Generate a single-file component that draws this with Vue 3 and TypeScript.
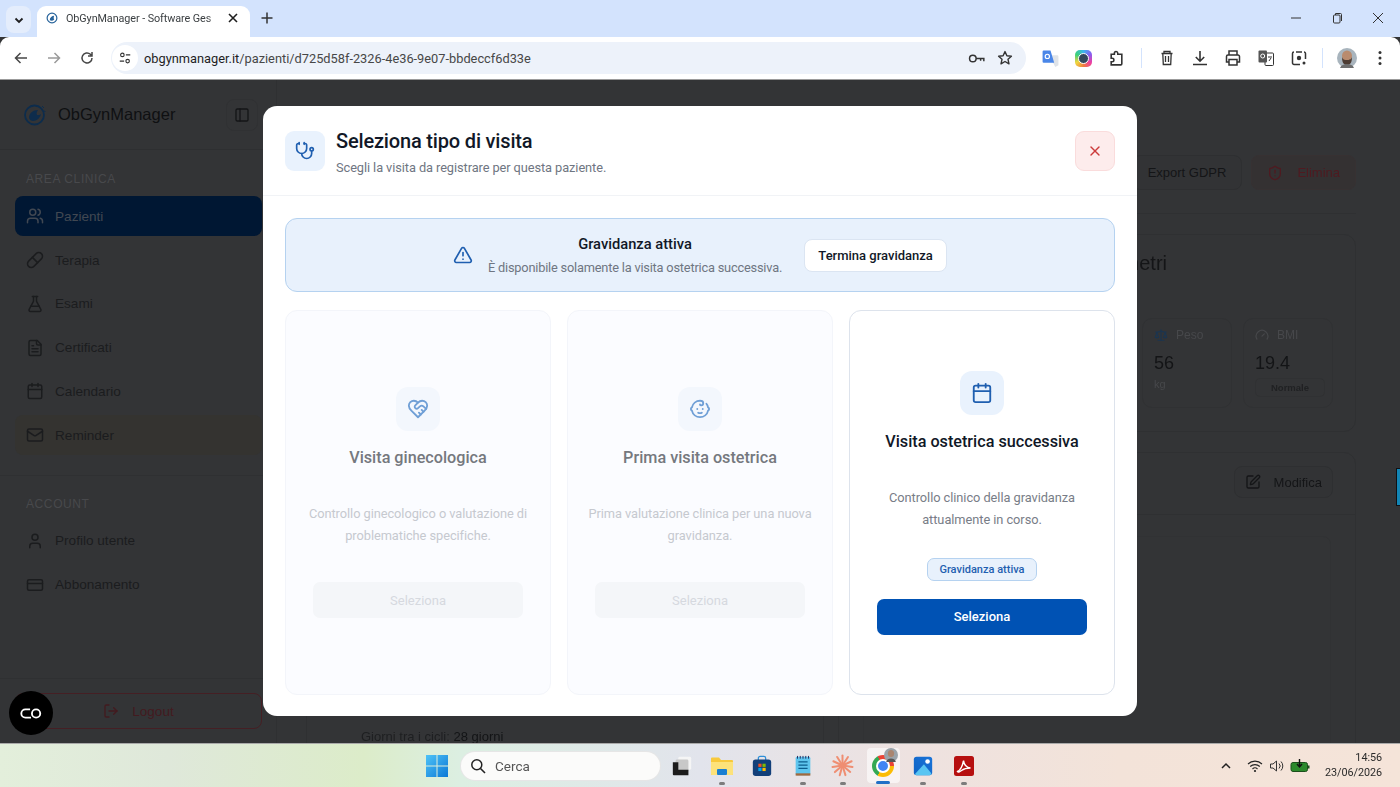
<template>
  <div class="screen">
    <!-- browser chrome -->
    <div class="tabstrip">
      <button class="tab-list">
        <svg viewBox="0 0 12 12" width="12" height="12"><path d="M2.5 4.5 6 8l3.5-3.5" fill="none" stroke="#1f1f1f" stroke-width="1.8" /></svg>
      </button>
      <div class="tab">
        <svg class="favicon" viewBox="0 0 16 16" width="12" height="12">
          <circle cx="8" cy="8" r="6.5" fill="none" stroke="#27639b" stroke-width="1.6" />
          <path d="M5 11c0-4 3-6 6-6-1 2-1 4 0 5-2 2-4 2-6 1Z" fill="#27639b" />
        </svg>
        <span class="tab-title">ObGynManager - Software Ges</span>
        <svg class="tab-close" viewBox="0 0 12 12" width="12" height="12"><path d="m2 2 8 8M10 2l-8 8" stroke="#1f1f1f" stroke-width="1.6" /></svg>
      </div>
      <svg class="tab-new" viewBox="0 0 14 14" width="14" height="14"><path d="M7 1.5v11M1.5 7h11" stroke="#333" stroke-width="1.5" /></svg>
      <div class="win-controls">
        <span class="win-btn"><svg viewBox="0 0 12 12" width="12" height="12"><path d="M1 6h10" stroke="#333" /></svg></span>
        <span class="win-btn"><svg viewBox="0 0 12 12" width="12" height="12"><rect x="2.5" y="3" width="6.5" height="8" rx="1" fill="none" stroke="#333" /><path d="M4.5 3V1.5h5a1 1 0 0 1 1 1V9" fill="none" stroke="#333" /></svg></span>
        <span class="win-btn"><svg viewBox="0 0 12 12" width="12" height="12"><path d="m1 1 10 10M11 1 1 11" stroke="#333" /></svg></span>
      </div>
    </div>

    <div class="toolbar">
      <span class="slot"><svg viewBox="0 0 16 16" width="16" height="16"><path d="M14 8H2.8M7.5 3 2.5 8l5 5" fill="none" stroke="#474747" stroke-width="1.5" /></svg></span>
      <span class="slot"><svg viewBox="0 0 16 16" width="16" height="16"><path d="M2 8h11.2M8.5 3l5 5-5 5" fill="none" stroke="#9a9a9a" stroke-width="1.5" /></svg></span>
      <span class="slot"><svg viewBox="0 0 16 16" width="16" height="16"><path d="M13 8a5 5 0 1 1-1.6-3.7L13 6M13 2v4H9" fill="none" stroke="#474747" stroke-width="1.5" /></svg></span>
      <div class="omnibox">
        <span class="site-info">
          <svg viewBox="0 0 16 16" width="14" height="14"><circle cx="5" cy="4.5" r="2" fill="none" stroke="#333" stroke-width="1.3" /><path d="M9 4.5h5M2 11.5h5" stroke="#333" stroke-width="1.3" /><circle cx="11" cy="11.5" r="2" fill="none" stroke="#333" stroke-width="1.3" /></svg>
        </span>
        <span class="url">obgynmanager.it<span class="url-path">/pazienti/d725d58f-2326-4e36-9e07-bbdeccf6d33e</span></span>
        <svg class="omni-key" viewBox="0 0 18 12" width="17" height="11"><circle cx="5" cy="6" r="3.6" fill="none" stroke="#333" stroke-width="1.6" /><path d="M8.5 6H17v3M13.5 6v2.5" fill="none" stroke="#333" stroke-width="1.6" /></svg>
        <svg class="omni-star" viewBox="0 0 16 16" width="16" height="16"><path d="m8 1.6 1.9 4.2 4.5.5-3.4 3 1 4.5L8 11.5l-4 2.3 1-4.5-3.4-3 4.5-.5Z" fill="none" stroke="#333" stroke-width="1.4" stroke-linejoin="round" /></svg>
      </div>
      <span class="slot ext-first">
        <svg viewBox="0 0 18 18" width="19" height="19"><path d="M8 6h7.5a1 1 0 0 1 1 1v8.5l-3 1.5z" fill="#dfe3e8" /><path d="M2.5 1.5H9l3.5 11.5H2.5a1 1 0 0 1-1-1v-9.5a1 1 0 0 1 1-1Z" fill="#4a86e8" /><circle cx="6" cy="7" r="2" fill="none" stroke="#fff" stroke-width="1.1" /></svg>
      </span>
      <span class="slot"><span class="ring"><i></i></span></span>
      <span class="slot">
        <svg viewBox="0 0 16 16" width="17" height="17"><path d="M3 4h3V3a1.6 1.6 0 0 1 3.2 0v1H13v9a1 1 0 0 1-1 1H3v-3h1a1.6 1.6 0 0 0 0-3.2H3Z" fill="none" stroke="#333" stroke-width="1.5" /></svg>
      </span>
      <i class="sep"></i>
      <span class="slot">
        <svg viewBox="0 0 16 16" width="16" height="16"><path d="M2.5 3.5h11M5 3.5v-2h6v2M3.8 3.5 4.3 14.5h7.4l.5-11M6.5 6v6M9.5 6v6" fill="none" stroke="#333" stroke-width="1.3" /></svg>
      </span>
      <span class="slot">
        <svg viewBox="0 0 18 18" width="18" height="18"><path d="M9 2v10M4.8 8 9 12.2 13.2 8M2 15.5h14" fill="none" stroke="#333" stroke-width="1.6" /></svg>
      </span>
      <span class="slot">
        <svg viewBox="0 0 18 18" width="18" height="18"><path d="M5 6V2h8v4M5 13H2.5V7.5A1.5 1.5 0 0 1 4 6h10a1.5 1.5 0 0 1 1.5 1.5V13H13M5 10.5h8V16H5Z" fill="none" stroke="#333" stroke-width="1.5" /></svg>
      </span>
      <span class="slot">
        <svg viewBox="0 0 18 18" width="18" height="18"><rect x="8" y="4" width="8.5" height="12.5" rx="1" fill="#fff" stroke="#333" /><rect x="1.5" y="1.5" width="8.5" height="12" rx="1" fill="#555" /><circle cx="5.7" cy="7" r="2" fill="none" stroke="#fff" /><path d="M11 8h4M12 12l2-3" stroke="#333" /></svg>
      </span>
      <span class="slot">
        <svg viewBox="0 0 18 18" width="18" height="18"><path d="M6 3h6M6 15.5H4a1.5 1.5 0 0 1-1.5-1.5V4.5A1.5 1.5 0 0 1 4 3M14 3a1.5 1.5 0 0 1 1.5 1.5V10M10 15.5H6" fill="none" stroke="#333" stroke-width="1.5" /><circle cx="9" cy="9" r="2.2" fill="#333" /><circle cx="14" cy="14" r="1.5" fill="#333" /></svg>
      </span>
      <i class="sep sep-second"></i>
      <span class="slot ext-avatar">
        <svg viewBox="0 0 20 20" width="20" height="20">
          <circle cx="10" cy="10" r="10" fill="#a8b4bd" />
          <ellipse cx="10" cy="8" rx="5" ry="5.5" fill="#b98b6e" />
          <path d="M5 9c0 6 2 8 5 8s5-2 5-8c-1 3-3 3-5 3s-4 0-5-3Z" fill="#4d3c33" />
          <path d="M3 20c1-3 4-4 7-4s6 1 7 4Z" fill="#6e6e6e" />
        </svg>
      </span>
      <span class="slot">
        <svg viewBox="0 0 4 16" width="4" height="16"><circle cx="2" cy="2.5" r="1.5" fill="#333" /><circle cx="2" cy="8" r="1.5" fill="#333" /><circle cx="2" cy="13.5" r="1.5" fill="#333" /></svg>
      </span>
    </div>

    <!-- application page, dimmed behind the dialog -->
    <div class="page">
      <aside class="sidebar">
        <div class="brand">
          <svg class="brand-logo" viewBox="0 0 24 24" width="24" height="24">
            <circle cx="11.5" cy="12" r="9.5" fill="none" stroke="#0d2c4c" stroke-width="1.8" />
            <path d="M6 15c0-5 4-8 9-8-1 2-2 3-1 5 2 0 3 0 4-1-1 4-4 7-8 7-2 0-3-1-4-3Z" fill="#0d2c4c" />
            <path d="M19 3l2 2M21 8l1.5.5" stroke="#0d2c4c" />
          </svg>
          <span class="brand-name">ObGynManager</span>
          <button class="collapse">
            <svg class="ico" viewBox="0 0 24 24" width="16" height="16" v-html="icons.panel"></svg>
          </button>
        </div>

        <div class="nav-section">
          <p class="nav-label">AREA CLINICA</p>
          <a
            v-for="item in clinicalNav"
            :key="item.label"
            class="nav-item"
            :class="{ active: item.active, warm: item.warm }"
          >
            <svg class="ico" viewBox="0 0 24 24" width="18" height="18" v-html="icons[item.icon]"></svg>
            {{ item.label }}
          </a>
        </div>

        <div class="nav-section account">
          <p class="nav-label">ACCOUNT</p>
          <a v-for="item in accountNav" :key="item.label" class="nav-item">
            <svg class="ico" viewBox="0 0 24 24" width="18" height="18" v-html="icons[item.icon]"></svg>
            {{ item.label }}
          </a>
        </div>

        <div class="sidebar-foot">
          <button class="logout">
            <svg class="ico" viewBox="0 0 24 24" width="16" height="16" v-html="icons.logout"></svg>
            Logout
          </button>
        </div>
      </aside>

      <main class="main">
        <div class="main-head">
          <button class="ghost">Export GDPR</button>
          <button class="ghost danger">
            <svg class="ico" viewBox="0 0 24 24" width="16" height="16" v-html="icons.shield"></svg>
            Elimina
          </button>
        </div>
        <div class="columns">
          <section class="card left-card">
            <div class="spacer"></div>
            <p class="cycle"><span>Giorni tra i cicli:</span> 28 giorni</p>
          </section>
          <div class="right-col">
            <section class="card params">
              <h2 class="params-title">Parametri</h2>
              <div class="stats">
                <div class="stat">
                  <span class="stat-label"><svg class="ico scale" viewBox="0 0 24 24" width="14" height="14" v-html="icons.scale"></svg>Peso</span>
                  <strong>56</strong>
                  <small>kg</small>
                </div>
                <div class="stat">
                  <span class="stat-label"><svg class="ico" viewBox="0 0 24 24" width="14" height="14" v-html="icons.gauge"></svg>BMI</span>
                  <strong>19.4</strong>
                  <em>Normale</em>
                </div>
              </div>
            </section>
            <section class="card detail">
              <div class="detail-head">
                <button class="ghost">
                  <svg class="ico" viewBox="0 0 24 24" width="16" height="16" v-html="icons.pen"></svg>
                  Modifica
                </button>
              </div>
              <div class="detail-box"></div>
            </section>
          </div>
        </div>
      </main>

      <span class="edge-cursor"></span>

      <div class="overlay">
        <div class="modal">
          <header class="modal-head">
            <span class="tile head-tile">
              <svg class="ico" viewBox="0 0 24 24" width="20" height="20" v-html="icons.stethoscope"></svg>
            </span>
            <div class="head-text">
              <h1>Seleziona tipo di visita</h1>
              <p>Scegli la visita da registrare per questa paziente.</p>
            </div>
            <button class="close">
              <svg class="ico" viewBox="0 0 24 24" width="16" height="16" v-html="icons.x"></svg>
            </button>
          </header>

          <div class="modal-body">
            <div class="notice">
              <svg class="ico notice-icon" viewBox="0 0 24 24" width="20" height="20" v-html="icons.alert"></svg>
              <div class="notice-text">
                <strong>Gravidanza attiva</strong>
                <span>È disponibile solamente la visita ostetrica successiva.</span>
              </div>
              <button class="end-btn">Termina gravidanza</button>
            </div>

            <div class="visit-grid">
              <article
                v-for="visit in visits"
                :key="visit.title"
                class="visit"
                :class="{ disabled: !visit.enabled }"
              >
                <span class="tile visit-tile">
                  <svg class="ico" viewBox="0 0 24 24" width="22" height="22" v-html="icons[visit.icon]"></svg>
                </span>
                <h3>{{ visit.title }}</h3>
                <p>{{ visit.text }}</p>
                <span v-if="visit.enabled" class="chip">Gravidanza attiva</span>
                <button class="select">Seleziona</button>
              </article>
            </div>
          </div>
        </div>
      </div>

      <button class="assist">
        <svg viewBox="0 0 26 14" width="24" height="13"><path d="M12 2.5H7a4.5 4.5 0 0 0 0 9h6" fill="none" stroke="#fff" stroke-width="2" /><circle cx="18.5" cy="7" r="4.5" fill="none" stroke="#fff" stroke-width="2" /></svg>
      </button>
    </div>

    <!-- windows taskbar -->
    <footer class="taskbar">
      <div class="task-center">
        <svg class="task-start" viewBox="0 0 24 24" width="24" height="24">
          <defs>
            <linearGradient id="win" x1="0" y1="0" x2="1" y2="1"><stop offset="0" stop-color="#4fc3f7" /><stop offset="1" stop-color="#0b78d6" /></linearGradient>
          </defs>
          <path d="M1 1h10.5v10.5H1zM12.5 1H23v10.5H12.5zM1 12.5h10.5V23H1zM12.5 12.5H23V23H12.5z" fill="url(#win)" />
        </svg>
        <div class="search">
          <svg viewBox="0 0 16 16" width="16" height="16"><circle cx="6.8" cy="6.8" r="5" fill="none" stroke="#222" stroke-width="1.5" /><path d="m10.5 10.5 4.5 4.5" stroke="#222" stroke-width="1.6" /></svg>
          <span>Cerca</span>
        </div>
        <span class="task-app">
          <svg viewBox="0 0 24 24" width="22" height="22"><rect x="8" y="2" width="14" height="14" rx="1.5" fill="#f5f5f5" /><rect x="5" y="5" width="14" height="14" rx="1.5" fill="#c8c8c8" /><path d="M2 8h6v8h11v6H3a1 1 0 0 1-1-1Z" fill="#1c1c1c" /></svg>
        </span>
        <span class="task-app running">
          <svg viewBox="0 0 24 24" width="24" height="24"><path d="M1 4.5a1 1 0 0 1 1-1h7l2 2.5h11a1 1 0 0 1 1 1V20a1 1 0 0 1-1 1H2a1 1 0 0 1-1-1Z" fill="#f8c93c" /><path d="M1 8h22V20a1 1 0 0 1-1 1H2a1 1 0 0 1-1-1Z" fill="#fde27a" /><rect x="7" y="15" width="10" height="6" rx="1" fill="#1b7fd1" /></svg>
        </span>
        <span class="task-app">
          <svg viewBox="0 0 24 24" width="22" height="22"><path d="M8 6V3.5a2 2 0 0 1 2-2h4a2 2 0 0 1 2 2V6" fill="none" stroke="#2f8fd8" stroke-width="1.4" /><rect x="2" y="5" width="20" height="18" rx="3" fill="#123f79" /><rect x="8" y="9.5" width="3.5" height="3.5" fill="#f25022" /><rect x="12.5" y="9.5" width="3.5" height="3.5" fill="#7fba00" /><rect x="8" y="14" width="3.5" height="3.5" fill="#00a4ef" /><rect x="12.5" y="14" width="3.5" height="3.5" fill="#ffb900" /></svg>
        </span>
        <span class="task-app running">
          <svg viewBox="0 0 24 24" width="22" height="24"><rect x="4" y="2" width="16" height="20" rx="1.5" fill="#5ec5ee" /><path d="M7 7.5h10M7 11h10M7 14.5h10" stroke="#0b5e8e" stroke-width="1.3" /><rect x="4" y="20" width="16" height="2.5" fill="#a0693e" /><path d="M6 1v3M9 1v3M12 1v3M15 1v3M18 1v3" stroke="#225" stroke-width="1" /></svg>
        </span>
        <span class="task-app running">
          <svg viewBox="0 0 24 24" width="23" height="23"><path v-for="a in rayAngles" :key="a" d="M12 12V1.5" stroke="#ef8e72" stroke-width="2.1" stroke-linecap="round" :transform="`rotate(${a} 12 12)`" /></svg>
        </span>
        <span class="task-app current">
          <span class="chrome-mark"><i></i></span>
          <svg class="chrome-badge" viewBox="0 0 20 20" width="14" height="14"><circle cx="10" cy="10" r="10" fill="#9aa3aa" /><ellipse cx="10" cy="8" rx="4.5" ry="5" fill="#a98570" /><path d="M3 20c1-4 4-5 7-5s6 1 7 5Z" fill="#555" /></svg>
        </span>
        <span class="task-app running">
          <svg viewBox="0 0 24 24" width="22" height="22"><defs><linearGradient id="pho" x1="0" y1="1" x2="1" y2="0"><stop offset="0" stop-color="#0e63c4" /><stop offset="1" stop-color="#1a73d8" /></linearGradient></defs><rect x="2" y="2" width="20" height="20" rx="3" fill="url(#pho)" /><path d="M3 21 13 10l8 10a2 2 0 0 1-1.5 2H5Z" fill="#58c5f2" /><circle cx="17" cy="7" r="2.5" fill="#fff" /></svg>
        </span>
        <span class="task-app running">
          <svg viewBox="0 0 24 24" width="24" height="24"><rect x="2" y="2" width="20" height="20" rx="2.5" fill="#b60f0f" /><path d="M5.5 17.5c3-1.5 5-5 6-11 .5 4 3 7 7 7.5-3.5 0-7 1-9 2.5-2 1.5-3.5 2-4 1Z" fill="none" stroke="#fff" stroke-width="1.5" /></svg>
        </span>
      </div>

      <div class="tray">
        <svg viewBox="0 0 12 12" width="12" height="12"><path d="m2 8 4-4 4 4" fill="none" stroke="#222" stroke-width="1.5" /></svg>
        <svg class="tray-wifi" viewBox="0 0 16 14" width="16" height="14"><path d="M1 5a10 10 0 0 1 14 0M3.2 7.5a7 7 0 0 1 9.6 0M5.5 10a3.6 3.6 0 0 1 5 0" fill="none" stroke="#222" stroke-width="1.1" /><circle cx="8" cy="12" r="1.1" fill="#222" /></svg>
        <svg class="tray-sound" viewBox="0 0 16 14" width="16" height="14"><path d="M1.5 5v4h2.5l3.5 3V2L4 5Z" fill="none" stroke="#333" /><path d="M10 4.5a3.5 3.5 0 0 1 0 5M12 2.5a6.5 6.5 0 0 1 0 9" fill="none" stroke="#333" /></svg>
        <svg class="tray-battery" viewBox="0 0 20 14" width="20" height="14"><rect x="1" y="3.5" width="16.5" height="9" rx="2" fill="#2c8a2c" stroke="#1c4f1c" /><rect x="18" y="6.5" width="1.5" height="3" fill="#1c4f1c" /><path d="M9.5 0v7M7 5l2.5 3L12 5" fill="none" stroke="#111" stroke-width="1.4" /></svg>
        <div class="clock">
          <span>14:56</span>
          <span>23/06/2026</span>
        </div>
      </div>
    </footer>
  </div>
</template>

<script setup lang="ts">
interface NavItem {
  label: string;
  icon: string;
  active?: boolean;
  warm?: boolean;
}

const icons: Record<string, string> = {
  panel: '<rect width="18" height="18" x="3" y="3" rx="2"/><path d="M9 3v18"/>',
  users:
    '<path d="M16 21v-2a4 4 0 0 0-4-4H6a4 4 0 0 0-4 4v2"/><circle cx="9" cy="7" r="4"/><path d="M22 21v-2a4 4 0 0 0-3-3.87"/><path d="M16 3.13a4 4 0 0 1 0 7.75"/>',
  pill: '<path d="m10.5 20.5 10-10a4.95 4.95 0 1 0-7-7l-10 10a4.95 4.95 0 1 0 7 7Z"/><path d="m8.5 8.5 7 7"/>',
  flask:
    '<path d="M14 2v6a2 2 0 0 0 .245.96l5.51 10.08A2 2 0 0 1 18 22H6a2 2 0 0 1-1.755-2.96l5.51-10.08A2 2 0 0 0 10 8V2"/><path d="M6.453 15h11.094"/><path d="M8.5 2h7"/>',
  file: '<path d="M15 2H6a2 2 0 0 0-2 2v16a2 2 0 0 0 2 2h12a2 2 0 0 0 2-2V7Z"/><path d="M14 2v4a2 2 0 0 0 2 2h4"/><path d="M10 9H8"/><path d="M16 13H8"/><path d="M16 17H8"/>',
  calendar:
    '<path d="M8 2v4"/><path d="M16 2v4"/><rect width="18" height="18" x="3" y="4" rx="2"/><path d="M3 10h18"/>',
  mail: '<rect width="20" height="16" x="2" y="4" rx="2"/><path d="m22 7-8.97 5.7a1.94 1.94 0 0 1-2.06 0L2 7"/>',
  user: '<path d="M19 21v-2a4 4 0 0 0-4-4H9a4 4 0 0 0-4 4v2"/><circle cx="12" cy="7" r="4"/>',
  card: '<rect width="20" height="14" x="2" y="5" rx="2"/><path d="M2 10h20"/>',
  logout:
    '<path d="M9 21H5a2 2 0 0 1-2-2V5a2 2 0 0 1 2-2h4"/><path d="m16 17 5-5-5-5"/><path d="M21 12H9"/>',
  shield:
    '<path d="M20 13c0 5-3.5 7.5-7.66 8.95a1 1 0 0 1-.67-.01C7.5 20.5 4 18 4 13V6a1 1 0 0 1 1-1c2 0 4.5-1.2 6.24-2.72a1.17 1.17 0 0 1 1.52 0C14.51 3.81 17 5 19 5a1 1 0 0 1 1 1z"/><path d="M12 8v4"/><path d="M12 16h.01"/>',
  scale:
    '<path d="m16 16 3-8 3 8c-.87.65-1.92 1-3 1s-2.13-.35-3-1Z"/><path d="m2 16 3-8 3 8c-.87.65-1.92 1-3 1s-2.13-.35-3-1Z"/><path d="M7 21h10"/><path d="M12 3v18"/><path d="M3 7h2c2 0 5-1 7-2 2 1 5 2 7 2h2"/>',
  gauge: '<path d="m12 14 4-4"/><path d="M3.34 19a10 10 0 1 1 17.32 0"/>',
  pen: '<path d="M12 3H5a2 2 0 0 0-2 2v14a2 2 0 0 0 2 2h14a2 2 0 0 0 2-2v-7"/><path d="M18.375 2.625a1 1 0 0 1 3 3l-9.013 9.014a2 2 0 0 1-.853.505l-2.873.84a.5.5 0 0 1-.62-.62l.84-2.873a2 2 0 0 1 .506-.852z"/>',
  stethoscope:
    '<path d="M11 2v2"/><path d="M5 2v2"/><path d="M5 3H4a2 2 0 0 0-2 2v4a6 6 0 0 0 12 0V5a2 2 0 0 0-2-2h-1"/><path d="M8 15a6 6 0 0 0 12 0v-3"/><circle cx="20" cy="10" r="2"/>',
  x: '<path d="M18 6 6 18"/><path d="m6 6 12 12"/>',
  alert:
    '<path d="m21.73 18-8-14a2 2 0 0 0-3.48 0l-8 14A2 2 0 0 0 4 21h16a2 2 0 0 0 1.73-3"/><path d="M12 9v4"/><path d="M12 17h.01"/>',
  heart:
    '<path d="M19 14c1.49-1.46 3-3.21 3-5.5A5.5 5.5 0 0 0 16.5 3c-1.76 0-3 .5-4.5 2-1.5-1.5-2.74-2-4.5-2A5.5 5.5 0 0 0 2 8.5c0 2.3 1.5 4.05 3 5.5l7 7Z"/><path d="M12 5 9.04 7.96a2.17 2.17 0 0 0 0 3.08c.82.82 2.13.85 3 .07l2.07-1.9a2.82 2.82 0 0 1 3.79 0l2.96 2.66"/><path d="m18 15-2-2"/><path d="m15 18-2-2"/>',
  baby: '<path d="M9 12h.01"/><path d="M15 12h.01"/><path d="M10 16c.5.3 1.2.5 2 .5s1.5-.2 2-.5"/><path d="M19 6.3a9 9 0 0 1 1.8 3.9 2 2 0 0 1 0 3.6 9 9 0 0 1-17.6 0 2 2 0 0 1 0-3.6A9 9 0 0 1 12 3c2 0 3.5 1.1 3.5 2.5s-.9 2.5-2 2.5c-.8 0-1.5-.4-1.5-1"/>',
};

const clinicalNav: NavItem[] = [
  { label: "Pazienti", icon: "users", active: true },
  { label: "Terapia", icon: "pill" },
  { label: "Esami", icon: "flask" },
  { label: "Certificati", icon: "file" },
  { label: "Calendario", icon: "calendar" },
  { label: "Reminder", icon: "mail", warm: true },
];

const accountNav: NavItem[] = [
  { label: "Profilo utente", icon: "user" },
  { label: "Abbonamento", icon: "card" },
];

const visits = [
  {
    title: "Visita ginecologica",
    text: "Controllo ginecologico o valutazione di problematiche specifiche.",
    icon: "heart",
    enabled: false,
  },
  {
    title: "Prima visita ostetrica",
    text: "Prima valutazione clinica per una nuova gravidanza.",
    icon: "baby",
    enabled: false,
  },
  {
    title: "Visita ostetrica successiva",
    text: "Controllo clinico della gravidanza attualmente in corso.",
    icon: "calendar",
    enabled: true,
  },
];

const rayAngles = [0, 33, 65, 98, 130, 163, 196, 229, 262, 295, 328];
</script>

<style>
html,
body {
  margin: 0;
  background: #333436;
}
</style>

<style scoped>
.screen {
  display: flex;
  flex-direction: column;
  width: 1400px;
  height: 787px;
  overflow: hidden;
  font-family: "Liberation Sans", Arial, sans-serif;
}
button {
  font: inherit;
  cursor: pointer;
}
.ico {
  display: block;
  flex: none;
  fill: none;
  stroke: currentColor;
  stroke-width: 2;
  stroke-linecap: round;
  stroke-linejoin: round;
}

/* browser chrome */
.tabstrip {
  display: flex;
  align-items: flex-start;
  flex: none;
  height: 37px;
  padding-top: 6px;
  box-sizing: border-box;
  background: #d3e3fd;
}
.tab-list {
  display: flex;
  align-items: center;
  justify-content: center;
  width: 25px;
  height: 27px;
  margin-left: 6px;
  padding: 0;
  border: 0;
  border-radius: 8px;
  background: #e4edfc;
}
.tab {
  position: relative;
  display: flex;
  align-items: center;
  width: 213px;
  height: 31px;
  margin-left: 6px;
  padding: 0 11px 7px 9px;
  box-sizing: border-box;
  border-radius: 9px 9px 0 0;
  background: #fff;
}
.tab-title {
  flex: 1;
  margin-left: 8px;
  overflow: hidden;
  font-family: Roboto, sans-serif;
  font-size: 10.8px;
  letter-spacing: -0.08px;
  white-space: nowrap;
  color: #3c4043;
  -webkit-mask-image: linear-gradient(90deg, #000 92%, rgba(0, 0, 0, 0.25) 100%);
  mask-image: linear-gradient(90deg, #000 92%, rgba(0, 0, 0, 0.25) 100%);
}
.tab-close {
  flex: none;
  margin-left: 8px;
}
.tab-new {
  margin: 5px 0 0 10px;
}
.win-controls {
  display: flex;
  margin: 0 1.5px 0 auto;
}
.win-btn {
  display: flex;
  justify-content: center;
  width: 41px;
  padding-top: 6px;
}
.toolbar {
  display: flex;
  align-items: center;
  flex: none;
  height: 43px;
  padding: 0 0 0 4.5px;
  box-sizing: border-box;
  border-bottom: 1px solid #9b9b9b;
  border-radius: 9px 9px 0 0;
  background: #fff;
}
.slot {
  display: flex;
  align-items: center;
  justify-content: center;
  flex: none;
  width: 33px;
}
.omnibox {
  display: flex;
  align-items: center;
  width: 915px;
  height: 32px;
  margin-left: 7.5px;
  padding: 0 13px 0 1px;
  box-sizing: border-box;
  border-radius: 16px;
  background: #edf2fa;
}
.site-info {
  display: flex;
  align-items: center;
  justify-content: center;
  width: 26px;
  height: 26px;
  border-radius: 50%;
  background: #fff;
}
.url {
  margin-left: 6px;
  font-family: Roboto, sans-serif;
  font-size: 12.8px;
  white-space: nowrap;
  color: #1f1f1f;
}
.url-path {
  color: #474747;
}
.omni-key {
  margin-left: auto;
}
.omni-star {
  margin-left: 12px;
}
.ext-first {
  margin-left: 7.5px;
}
.ring {
  display: flex;
  align-items: center;
  justify-content: center;
  width: 17px;
  height: 17px;
  border-radius: 5px;
  background: conic-gradient(#3bb6f0, #8a5cf0, #ee3fa0, #f07b3f, #f0d63f, #3bd07a, #3bb6f0);
}
.ring i {
  width: 9px;
  height: 9px;
  border: 1px solid #fff;
  border-radius: 50%;
  background: #33475b;
}
.sep {
  flex: none;
  width: 1px;
  height: 20px;
  margin: 0 8px 0 8.5px;
  background: #d3e3fd;
}
.sep-second {
  margin: 0 7.5px 0 6.5px;
}

/* page behind the dialog */
.page {
  position: relative;
  display: flex;
  flex: 1;
  min-height: 0;
  overflow: hidden;
  background: #333436;
}
.sidebar {
  display: flex;
  flex-direction: column;
  flex: none;
  width: 277px;
  box-sizing: border-box;
  border-right: 1px solid #2f3032;
}
.brand {
  display: flex;
  align-items: center;
  flex: none;
  height: 69px;
  padding: 0 18px 0 23px;
  border-bottom: 1px solid #2e2f31;
}
.brand-name {
  margin-left: 11px;
  font-size: 16.5px;
  color: #0f1012;
}
.collapse {
  display: flex;
  align-items: center;
  justify-content: center;
  width: 32px;
  height: 32px;
  margin-left: auto;
  padding: 0;
  border: 1px solid #303133;
  border-radius: 8px;
  background: transparent;
  color: #141517;
}
.nav-section {
  display: flex;
  flex-direction: column;
  gap: 3.75px;
  padding: 21px 14px 0 15px;
}
.nav-label {
  margin: 0 0 5.5px 11px;
  font-size: 12px;
  letter-spacing: 0.6px;
  line-height: 16px;
  color: #48494c;
}
.nav-item {
  display: flex;
  align-items: center;
  gap: 11px;
  height: 40px;
  padding: 0 11px;
  border-radius: 8px;
  font-size: 13.6px;
  color: #1b1c1e;
}
.nav-item.active {
  background: #001733;
  color: #414852;
}
.nav-item.warm {
  background: #343330;
}
.account {
  margin-top: 19.5px;
  padding-top: 20px;
  border-top: 1px solid #2f3032;
}
.sidebar-foot {
  margin-top: auto;
  padding: 14px 14px 14px 15px;
  border-top: 1px solid #2f3032;
}
.logout {
  display: flex;
  align-items: center;
  justify-content: center;
  gap: 13px;
  width: 100%;
  height: 36px;
  padding: 0;
  border: 1px solid #451f24;
  border-radius: 8px;
  background: transparent;
  font-size: 13.5px;
  color: #431a1f;
}
.main {
  flex: 1;
  min-width: 0;
  padding: 75px 44px 0 29px;
  filter: blur(0.3px);
}
.main-head {
  display: flex;
  justify-content: flex-end;
  gap: 9px;
  height: 58px;
  border-bottom: 1px solid #2f3032;
}
.ghost {
  display: flex;
  align-items: center;
  justify-content: center;
  gap: 14px;
  height: 35px;
  padding: 0 15px;
  border: 1px solid #2e2f31;
  border-radius: 8px;
  background: #323335;
  font-size: 13px;
  color: #141517;
}
.ghost.danger {
  border-color: #373132;
  background: #343132;
  color: #4f1a20;
}
.columns {
  display: grid;
  grid-template-columns: 518px 518px;
  gap: 14px;
  margin-top: 20px;
}
.card {
  border: 1px solid #2f3032;
  border-radius: 12px;
}
.spacer {
  height: 496px;
}
.cycle {
  margin: 0 0 0 54px;
  font-size: 13px;
  line-height: 12px;
  color: #131416;
}
.cycle span {
  color: #1e1f21;
}
.right-col {
  display: flex;
  flex-direction: column;
  gap: 20px;
}
.params {
  position: relative;
  box-sizing: border-box;
  height: 198px;
}
.params-title {
  margin: 15px 0 0;
  padding-right: 188px;
  text-align: right;
  font-size: 20px;
  font-weight: 400;
  line-height: 26px;
  color: #141517;
}
.stats {
  display: flex;
  justify-content: flex-end;
  gap: 11px;
  margin-top: 42px;
  padding-right: 22px;
}
.stat {
  display: flex;
  flex-direction: column;
  width: 90px;
  height: 90px;
  padding: 9px 0 0 11px;
  box-sizing: border-box;
  border: 1px solid #303133;
  border-radius: 10px;
  font-size: 12px;
  color: #47484b;
}
.stat-label {
  display: flex;
  align-items: center;
  gap: 8px;
}
.stat-label .scale {
  color: #1b3550;
}
.stat strong {
  margin-top: 10px;
  font-size: 18px;
  font-weight: 400;
  line-height: 22px;
  color: #131416;
}
.stat small {
  margin-top: 4px;
  font-size: 11px;
  color: #47484b;
}
.stat em {
  width: 68px;
  margin-top: 4px;
  border: 1px solid #303133;
  border-radius: 5px;
  font-size: 9.5px;
  font-style: normal;
  font-weight: 700;
  line-height: 17px;
  text-align: center;
  color: #202123;
}
.detail {
  height: 400px;
}
.detail-head {
  display: flex;
  justify-content: flex-end;
  height: 48px;
  padding: 13px 22px 0 0;
  border-bottom: 1px solid #2f3032;
}
.detail-head .ghost {
  gap: 13px;
  height: 32px;
  padding: 0 10px;
}
.detail-box {
  height: 300px;
  margin: 21px 24px 0;
  border: 1px solid #313234;
  border-radius: 8px;
}
.edge-cursor {
  position: absolute;
  top: 388px;
  right: -2px;
  width: 4px;
  height: 36px;
  border: 1px solid #101114;
  background: #1285b5;
}

/* dialog */
.overlay {
  position: absolute;
  inset: 0;
  display: flex;
  align-items: center;
  justify-content: center;
  padding-bottom: 1px;
}
.modal {
  display: flex;
  flex-direction: column;
  width: 874px;
  height: 610px;
  border-radius: 14px;
  background: #fff;
  font-family: Roboto, sans-serif;
  color: #111827;
}
.modal-head {
  display: flex;
  align-items: center;
  flex: none;
  height: 90px;
  padding: 0 22px;
  box-sizing: border-box;
  border-bottom: 1px solid #f1f3f6;
}
.tile {
  display: flex;
  align-items: center;
  justify-content: center;
  flex: none;
  background: #e9f2fd;
  color: #1f5fb0;
}
.head-tile {
  width: 40px;
  height: 40px;
  border-radius: 9px;
}
.head-text {
  flex: 1;
  margin-left: 11px;
  padding-top: 4px;
}
.head-text h1 {
  margin: 0;
  font-size: 20px;
  font-weight: 500;
  letter-spacing: -0.17px;
  line-height: 26px;
  color: #111827;
}
.head-text p {
  margin: 4px 0 0;
  font-size: 12.8px;
  letter-spacing: -0.08px;
  line-height: 20px;
  color: #6f7682;
}
.close {
  display: flex;
  align-items: center;
  justify-content: center;
  width: 40px;
  height: 40px;
  padding: 0;
  border: 1px solid #fadcdc;
  border-radius: 9px;
  background: #fdecec;
  color: #cc3a3a;
}
.modal-body {
  display: flex;
  flex-direction: column;
  flex: 1;
  min-height: 0;
  gap: 18px;
  padding: 22px 22px 21px;
}
.notice {
  display: flex;
  align-items: center;
  justify-content: center;
  flex: none;
  height: 74px;
  box-sizing: border-box;
  border: 1px solid #b5d2f0;
  border-radius: 12px;
  background: #e8f1fc;
}
.notice-icon {
  color: #1f5fb0;
}
.notice-text {
  display: flex;
  flex-direction: column;
  align-items: center;
  margin: 0 22px 0 15px;
  padding-top: 2px;
  font-size: 12.8px;
  letter-spacing: -0.2px;
  line-height: 24px;
  color: #6f7682;
}
.notice-text strong {
  font-size: 14.7px;
  font-weight: 500;
  letter-spacing: 0;
  color: #111827;
}
.end-btn {
  width: 143px;
  height: 33px;
  padding: 0;
  border: 1px solid #dbe5f2;
  border-radius: 8px;
  background: #fff;
  font-size: 13px;
  font-weight: 500;
  color: #111827;
}
.visit-grid {
  display: grid;
  grid-template-columns: repeat(3, 1fr);
  gap: 16px;
  flex: 1;
  min-height: 0;
}
.visit {
  display: flex;
  flex-direction: column;
  align-items: center;
  justify-content: center;
  padding: 0 18px;
  border: 1px solid #dde3ec;
  border-radius: 12px;
  background: #fff;
  text-align: center;
}
.visit-tile {
  width: 44px;
  height: 44px;
  border-radius: 12px;
}
.visit h3 {
  margin: 15px 0 0;
  font-size: 16.2px;
  font-weight: 500;
  line-height: 24px;
  color: #111827;
}
.visit p {
  margin: 33px 0 0;
  font-size: 12.8px;
  letter-spacing: -0.05px;
  line-height: 22px;
  color: #787d87;
}
.chip {
  margin-top: 27px;
  padding: 0 11px;
  border: 1px solid #b5d2f0;
  border-radius: 7px;
  background: #e8f1fc;
  font-size: 11px;
  font-weight: 500;
  line-height: 21px;
  color: #1f5fb0;
}
.select {
  width: 210px;
  height: 36px;
  margin-top: 18px;
  border: 0;
  border-radius: 7px;
  background: #0052b4;
  font-size: 13px;
  font-weight: 500;
  color: #fff;
}
.visit.disabled {
  border-color: #f3f5fa;
  background: #fbfcff;
}
.visit.disabled .visit-tile {
  background: #f3f7fd;
  color: #6f9fd6;
}
.visit.disabled h3 {
  color: #75787e;
}
.visit.disabled p {
  color: #c6c9cf;
}
.visit.disabled .select {
  margin-top: 35px;
  background: #f4f6f9;
  font-weight: 400;
  color: #d6d9df;
}

.assist {
  position: absolute;
  left: 9px;
  top: 611px;
  display: flex;
  align-items: center;
  justify-content: center;
  width: 44px;
  height: 44px;
  padding: 0;
  border: 0;
  border-radius: 50%;
  background: #000;
}

/* taskbar */
.taskbar {
  position: relative;
  display: flex;
  align-items: center;
  flex: none;
  height: 44px;
  box-sizing: border-box;
  border-top: 1px solid #a9a9a9;
  background: linear-gradient(90deg, #e3efdb 0, #dfe8da 12%, #dcecc9 26%, #dcefe2 33%, #e2e4ec 50%, #eee2e0 65%, #f3e3d9 80%, #f5e4d9 100%);
}
.task-center {
  display: flex;
  align-items: center;
  margin-left: 425px;
}
.task-start {
  flex: none;
}
.search {
  display: flex;
  align-items: center;
  gap: 9px;
  width: 199px;
  height: 28px;
  margin: 0 1.5px 0 12px;
  padding-left: 9px;
  box-sizing: border-box;
  border-radius: 14px;
  background: #fbfbfa;
  box-shadow: 0 0 0 1px #e6e6e6;
  font-family: Roboto, sans-serif;
  font-size: 13.5px;
  color: #555;
}
.task-app {
  position: relative;
  display: flex;
  align-items: center;
  justify-content: center;
  flex: none;
  width: 40.3px;
  height: 35px;
}
.task-app.running::after {
  content: "";
  position: absolute;
  left: 50%;
  bottom: -2px;
  width: 6px;
  height: 3px;
  margin-left: -3px;
  border-radius: 2px;
  background: #7c7c7c;
}
.task-app.current {
  width: 33px;
  margin: 0 3.65px;
  border-radius: 4px;
  background: rgba(255, 255, 255, 0.6);
}
.task-app.current::after {
  content: "";
  position: absolute;
  left: 50%;
  bottom: -1px;
  width: 14px;
  height: 3px;
  margin-left: -7px;
  border-radius: 2px;
  background: #1f6fc6;
}
.chrome-mark {
  display: flex;
  align-items: center;
  justify-content: center;
  width: 22px;
  height: 22px;
  border-radius: 50%;
  background: conic-gradient(from -30deg, #ea4335 0 120deg, #fbbc04 120deg 240deg, #34a853 240deg 360deg);
}
.chrome-mark i {
  width: 10px;
  height: 10px;
  border: 2px solid #fff;
  border-radius: 50%;
  background: #4285f4;
}
.chrome-badge {
  position: absolute;
  top: 0;
  right: 2px;
}
.tray {
  position: absolute;
  right: 18px;
  top: 0;
  bottom: 0;
  display: flex;
  align-items: center;
}
.tray-wifi {
  margin-left: 15px;
}
.tray-sound {
  margin-left: 6px;
}
.tray-battery {
  margin-left: 5px;
}
.clock {
  display: flex;
  flex-direction: column;
  align-items: flex-end;
  margin-left: 15px;
  font-family: Roboto, sans-serif;
  font-size: 10.8px;
  letter-spacing: -0.05px;
  line-height: 14.5px;
  color: #2a2a2a;
}
</style>
